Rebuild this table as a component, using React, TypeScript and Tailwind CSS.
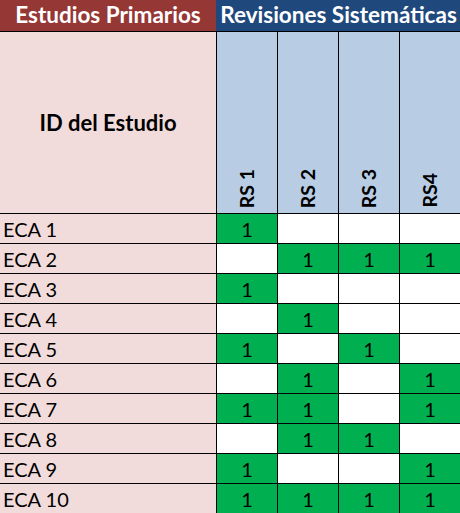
import React from "react";

const data: number[][] = [
  [1, 0, 0, 0],
  [0, 1, 1, 1],
  [1, 0, 0, 0],
  [0, 1, 0, 0],
  [1, 0, 1, 0],
  [0, 1, 0, 1],
  [1, 1, 0, 1],
  [0, 1, 1, 0],
  [1, 0, 0, 1],
  [1, 1, 1, 1],
];

const rsLabels = ["RS 1", "RS 2", "RS 3", "RS4"];

export default function App() {
  return (
    <div
      className="w-[460px] h-[513px] overflow-hidden bg-white text-black"
      style={{ fontFamily: "Lato, 'Open Sans', sans-serif" }}
    >
      <div className="w-[461px]">
        {/* Top header */}
        <div className="flex h-[32px] border-b border-black">
          <div className="w-[216px] bg-[#953735] text-white font-bold text-[22.5px] leading-none flex items-center justify-center pb-[1px]">
            Estudios Primarios
          </div>
          <div className="flex-1 bg-[#1f497d] text-white font-bold text-[22.5px] leading-none flex items-center justify-center pb-[1px]">
            Revisiones Sistemáticas
          </div>
        </div>
        {/* Second header */}
        <div className="flex h-[182px] border-b border-black">
          <div className="w-[217px] border-r border-black bg-[#f2dcdb] font-bold text-[22px] flex items-center justify-center">
            ID del Estudio
          </div>
          {rsLabels.map((l) => (
            <div
              key={l}
              className="w-[61px] border-r border-black bg-[#b8cce4] flex items-end justify-center pb-[5px]"
            >
              <span className="font-bold text-[19.5px] leading-none [writing-mode:vertical-rl] rotate-180">
                {l}
              </span>
            </div>
          ))}
        </div>
        {/* Data rows */}
        {data.map((row, i) => (
          <div key={i} className="flex h-[30px] border-b border-black">
            <div className="w-[217px] border-r border-black bg-[#f2dcdb] text-[20px] leading-none flex items-end pl-[3px] pb-[4px]">
              ECA {i + 1}
            </div>
            {row.map((v, j) => (
              <div
                key={j}
                className={
                  "w-[61px] border-r border-black text-[20px] leading-none flex items-end justify-center pb-[4px] " +
                  (v ? "bg-[#00b050]" : "bg-white")
                }
              >
                {v ? "1" : ""}
              </div>
            ))}
          </div>
        ))}
      </div>
    </div>
  );
}
